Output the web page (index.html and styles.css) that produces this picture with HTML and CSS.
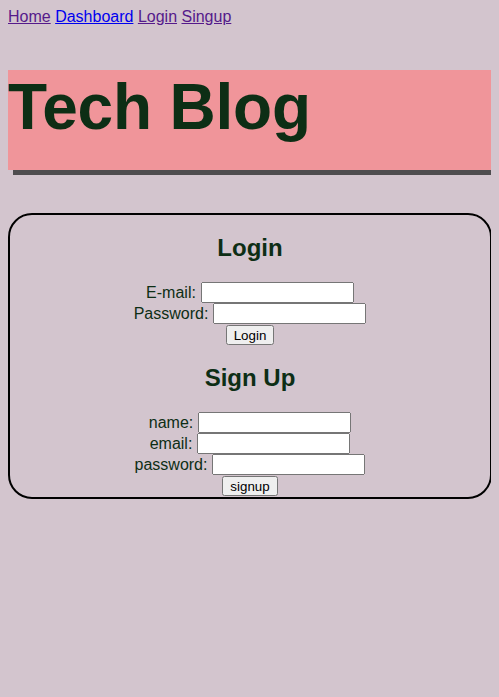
FILE: index.html
```html
<!DOCTYPE html>
<html lang="en">
<head>
<meta charset="utf-8">
<title>Tech Blog</title>
<link rel="stylesheet" href="styles.css">
</head>
<body>
<nav class="nav">
  <a href="#" class="nav-link visited">Home</a>
  <a href="#" class="nav-link">Dashboard</a>
  <a href="#" class="nav-link visited">Login</a>
  <a href="#" class="nav-link visited">Singup</a>
</nav>
<h1 class="title">Tech Blog</h1>
<main class="card">
  <h2 class="card-heading">Login</h2>
  <form class="form">
    <div class="row"><label>E-mail:</label><input type="text"></div>
    <div class="row"><label>Password:</label><input type="password"></div>
    <div class="row"><button type="button">Login</button></div>
  </form>
  <h2 class="card-heading">Sign Up</h2>
  <form class="form">
    <div class="row"><label>name:</label><input type="text"></div>
    <div class="row"><label>email:</label><input type="text"></div>
    <div class="row"><label>password:</label><input type="password"></div>
    <div class="row"><button type="button">signup</button></div>
  </form>
</main>
</body>
</html>
```
FILE: styles.css
```css
html {
  background: #d3c5ce;
}
body {
  margin: 8px;
  font-family: "Liberation Sans", Arial, sans-serif;
  font-size: 16px;
  color: #0d2e15;
}
.nav {
  height: 18px;
}
.nav-link {
  color: #0000ee;
}
.nav-link.visited {
  color: #551a8b;
}
.title {
  font-size: 64px;
  font-weight: bold;
  margin: 44px -1px 43px 0;
  height: 100px;
  background: #f0959a;
  box-shadow: 5px 5px 0 0 #4f4d4f;
  color: #0d2e15;
  letter-spacing: -0.2px;
}
.card {
  border: 2px solid #000;
  border-radius: 24px;
  text-align: center;
  margin-right: -1px;
}
.card-heading {
  font-size: 24px;
  margin: 19px 0 20px;
}
.card-heading + .form .row:first-child {
  margin-top: 0;
}
.form {
  margin: 0;
}
.row {
  display: flex;
  justify-content: center;
  align-items: center;
  gap: 4px;
  height: 21px;
}
.row input {
  font-family: "Liberation Sans", Arial, sans-serif;
  font-size: 13.33px;
  width: 153px;
  box-sizing: border-box;
  height: 21px;
  margin: 0 0 0 1px;
}
.row button {
  font-family: "Liberation Sans", Arial, sans-serif;
  font-size: 13.33px;
  height: 20px;
  padding: 1px 6px;
}
.form:last-child .row:last-child {
  height: 22px;
}
```
